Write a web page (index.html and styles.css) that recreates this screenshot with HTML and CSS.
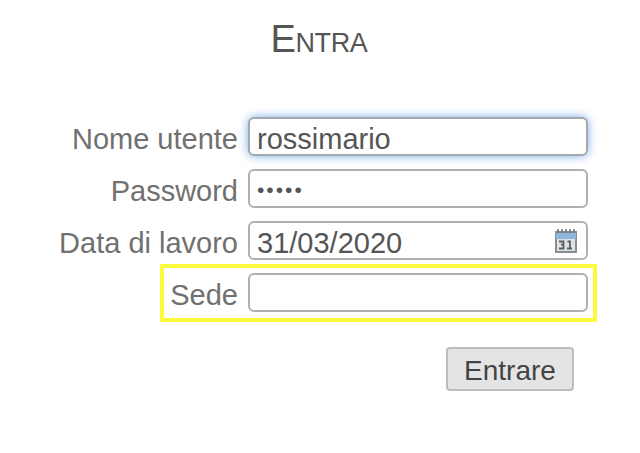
FILE: index.html
```html
<!DOCTYPE html>
<html lang="it">
<head>
<meta charset="utf-8">
<title>Entra</title>
<link rel="stylesheet" href="styles.css">
</head>
<body>
<main class="page">
  <h1 class="title">Entra</h1>
  <form class="form">
    <div class="row">
      <label class="label" for="u">Nome utente</label>
      <div class="field focus" id="u">rossimario</div>
    </div>
    <div class="row">
      <label class="label" for="p">Password</label>
      <div class="field secret" id="p">•••••</div>
    </div>
    <div class="row">
      <label class="label" for="d">Data di lavoro</label>
      <div class="field date" id="d">
        <span>31/03/2020</span>
        <svg class="cal" width="22" height="24" viewBox="0 0 22 24" aria-hidden="true">
          <rect x="0" y="2" width="22" height="22" fill="#868e94"/>
          <rect x="1" y="4" width="20" height="6" fill="#8fb6dc"/>
          <rect x="2" y="10" width="18" height="12" fill="#dfe2e4"/>
          <path d="M3 0v4M7 0v4M11 0v4M15 0v4M19 0v4" stroke="#6f777d" stroke-width="1.600"/>
          <path d="M4 12.500h4.500v3H6M8.500 15.500v4H4M12.500 12.500h2.500v7M12 19.500h5" fill="none" stroke="#596167" stroke-width="1.800"/>
        </svg>
      </div>
    </div>
    <div class="row marked">
      <label class="label" for="s">Sede</label>
      <div class="field" id="s"></div>
    </div>
    <div class="actions">
      <button class="button" type="button">Entrare</button>
    </div>
  </form>
</main>
</body>
</html>
```
FILE: styles.css
```css
html, body {
  margin: 0;
  background: #fff;
}
.page {
  width: 640px;
  height: 453px;
  overflow: hidden;
  font-family: "Liberation Sans", Arial, sans-serif;
  color: #666;
}
.title {
  margin: 0;
  padding: 17px 2px 0 0;
  height: 102px;
  box-sizing: border-box;
  text-align: center;
  font-size: 38px;
  letter-spacing: -0.4px;
  line-height: 44px;
  font-weight: normal;
  font-variant: small-caps;
  color: #555;
}
.form {
  display: flex;
  flex-direction: column;
  gap: 13px;
  padding-top: 15px;
}
.row {
  display: flex;
  align-items: center;
  gap: 10px;
  position: relative;
}
.label {
  width: 238px;
  padding-top: 6px;
  text-align: right;
  font-size: 29px;
  line-height: 33px;
  color: #707070;
}
.field {
  box-sizing: border-box;
  width: 340px;
  height: 39px;
  border: 2px solid #b0b0b0;
  border-radius: 6px;
  padding: 0 7px;
  font-size: 29px;
  line-height: 40px;
  color: #555;
  background: #fff;
}
.focus {
  border-color: #a4a9ad;
  box-shadow: 0 0 10px rgba(90, 150, 225, 0.8);
}
.secret {
  font-size: 21px;
  line-height: 38px;
  letter-spacing: 2px;
}
.date {
  display: flex;
  align-items: flex-start;
  justify-content: space-between;
  padding-right: 9px;
}
.cal {
  margin-top: 6px;
}
.marked::after {
  content: "";
  position: absolute;
  left: 160px;
  top: -9px;
  width: 437px;
  height: 58px;
  box-sizing: border-box;
  border: 4px solid #fcfa3c;
  pointer-events: none;
}
.actions {
  display: flex;
  justify-content: flex-end;
  padding: 22px 66px 0 0;
}
.button {
  box-sizing: border-box;
  width: 128px;
  height: 44px;
  border: 2px solid #bdbdbd;
  border-radius: 4px;
  background: #e4e4e4;
  font-family: inherit;
  font-size: 28px;
  color: #444;
  padding: 3px 0 0;
}
```
